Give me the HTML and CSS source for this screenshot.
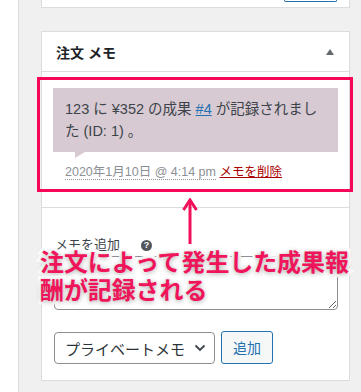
FILE: index.html
```html
<!DOCTYPE html>
<html lang="ja">
<head>
  <meta charset="UTF-8" />
  <title>注文メモ</title>
  <link rel="stylesheet" href="styles.css">
</head>
<body>
  <div class="page">
    <div class="strip"></div>

    <div class="sidebar">
      <!-- previous box, only its bottom edge is visible -->
      <div class="postbox postbox-prev">
        <span class="prev-button"></span>
      </div>

      <!-- 注文メモ -->
      <div class="postbox">
        <div class="postbox-header">
          <h2>注文 メモ</h2>
          <span class="toggle"></span>
        </div>

        <ul class="notes">
          <li class="note">
            <div class="note-content">
              <p>123 に ¥352 の成果 <a href="#">#4</a> が記録されました (ID: 1) 。</p>
            </div>
            <p class="meta">
              <abbr class="exact-date">2020年1月10日 @ 4:14 pm</abbr>
              <a href="#" class="delete-note">メモを削除</a>
            </p>
          </li>
        </ul>

        <div class="add-note">
          <p class="add-label">
            <label for="note">メモを追加</label>
            <span class="help-tip">?</span>
          </p>
          <textarea id="note" class="note-input"></textarea>
          <div class="note-actions">
            <div class="select">
              <span>プライベートメモ</span>
              <svg class="chevron" width="12" height="8" viewBox="0 0 12 8">
                <path d="M1.5 1.5 L6 6 L10.5 1.5" fill="none" stroke="#3c434a" stroke-width="1.8"/>
              </svg>
            </div>
            <button class="button">追加</button>
          </div>
        </div>
      </div>
    </div>
  </div>

  <!-- annotation -->
  <div class="callout-box"></div>
  <svg class="callout-arrow" width="16" height="48" viewBox="0 0 16 48">
    <path d="M8 3 L8 46" stroke="#f2105a" stroke-width="3" fill="none"/>
    <path d="M1.5 12 L8 2 L14.5 12" stroke="#f2105a" stroke-width="3" fill="none" stroke-linejoin="miter"/>
  </svg>
  <p class="callout-text">注文によって発生した成果報<br>酬が記録される</p>
</body>
</html>
```

FILE: styles.css
```css
body {
  margin: 0;
  position: relative;
  font-family: "Liberation Sans", "Noto Sans CJK JP", sans-serif;
  color: #3c434a;
  background: #f0f0f1;
}
.page {
  display: flex;
  min-height: 392px;
}
.strip {
  width: 19px;
  background: #fff;
  border-right: 1px solid #dcdcde;
}
.sidebar {
  flex: 1;
  padding: 0 11px 0 22px;
}

/* boxes */
.postbox {
  background: #fff;
  border: 1px solid #dcdcde;
}
.postbox-prev {
  height: 7px;
  border-top: none;
  display: flex;
  justify-content: flex-end;
  padding-right: 12px;
  margin-bottom: 23px;
}
.prev-button {
  width: 51px;
  height: 1px;
  border: 1px solid #2271b1;
  border-top: none;
  border-radius: 0 0 3px 3px;
}
.postbox-header {
  height: 39px;
  border-bottom: 1px solid #dcdcde;
  display: flex;
  align-items: center;
  justify-content: space-between;
  padding: 0 15px 0 14px;
}
.postbox-header h2 {
  margin: 0;
  font-size: 14px;
  font-weight: bold;
  color: #1d2327;
}
.toggle {
  width: 0;
  height: 0;
  border-left: 4px solid transparent;
  border-right: 4px solid transparent;
  border-bottom: 6px solid #646970;
}

/* notes */
.notes {
  list-style: none;
  margin: 0;
  padding: 16px 11px 15px;
}
.note-content {
  position: relative;
  background: #d7cad2;
  padding: 10px 12px;
}
.note-content p {
  margin: 0;
  font-size: 14.5px;
  line-height: 22px;
}
.note-content a {
  color: #2271b1;
}
.note-content::after {
  content: "";
  position: absolute;
  bottom: -6px;
  left: 22px;
  border-style: solid;
  border-width: 6px 10px 0 0;
  border-color: #d7cad2 transparent transparent transparent;
}
.meta {
  margin: 0;
  padding: 10px 12px;
  font-size: 12.5px;
  line-height: 20px;
  color: #8c8f94;
}
.exact-date {
  text-decoration: none;
  border-bottom: 1px dotted #8c8f94;
}
.delete-note {
  color: #a00;
}

/* add note */
.add-note {
  border-top: 1px solid #dcdcde;
  padding: 27px 11px 16px;
}
.add-label {
  margin: 0 0 1px 2px;
  font-size: 13px;
  line-height: 20px;
  display: flex;
  align-items: center;
  gap: 21px;
}
.help-tip {
  width: 11px;
  height: 11px;
  border-radius: 50%;
  background: #50575e;
  color: #fff;
  font-size: 9px;
  font-weight: bold;
  line-height: 11px;
  text-align: center;
}
.note-input {
  display: block;
  box-sizing: border-box;
  width: 284px;
  height: 54px;
  margin: 0 0 0 1px;
  border: 1px solid #8c8f94;
  border-radius: 4px;
}
.note-actions {
  display: flex;
  align-items: center;
  gap: 6px;
  margin-top: 20px;
}
.select {
  box-sizing: border-box;
  width: 161px;
  height: 32px;
  margin: 2px 0 0 1px;
  border: 1px solid #8c8f94;
  border-radius: 4px;
  display: flex;
  align-items: center;
  justify-content: space-between;
  padding: 0 8px 0 10px;
  font-size: 15px;
  color: #2c3338;
}
.button {
  box-sizing: border-box;
  width: 52px;
  height: 33px;
  background: #f6f7f7;
  border: 1px solid #2271b1;
  border-radius: 3px;
  color: #2271b1;
  font-family: inherit;
  font-size: 14px;
}

/* annotation overlay */
.callout-box {
  position: absolute;
  left: 37px;
  top: 77px;
  width: 310px;
  height: 109px;
  border: 3px solid #f7075a;
}
.callout-arrow {
  position: absolute;
  left: 182px;
  top: 198px;
}
.callout-text {
  position: absolute;
  left: 40px;
  top: 247px;
  margin: 0;
  font-family: "Noto Sans CJK JP", sans-serif;
  font-size: 24px;
  font-weight: bold;
  line-height: 28px;
  letter-spacing: -0.1px;
  color: #f0145a;
  -webkit-text-stroke: 6px #fff;
  paint-order: stroke fill;
  text-shadow: 0 1px 5px rgba(0, 0, 0, 0.35);
}
```
